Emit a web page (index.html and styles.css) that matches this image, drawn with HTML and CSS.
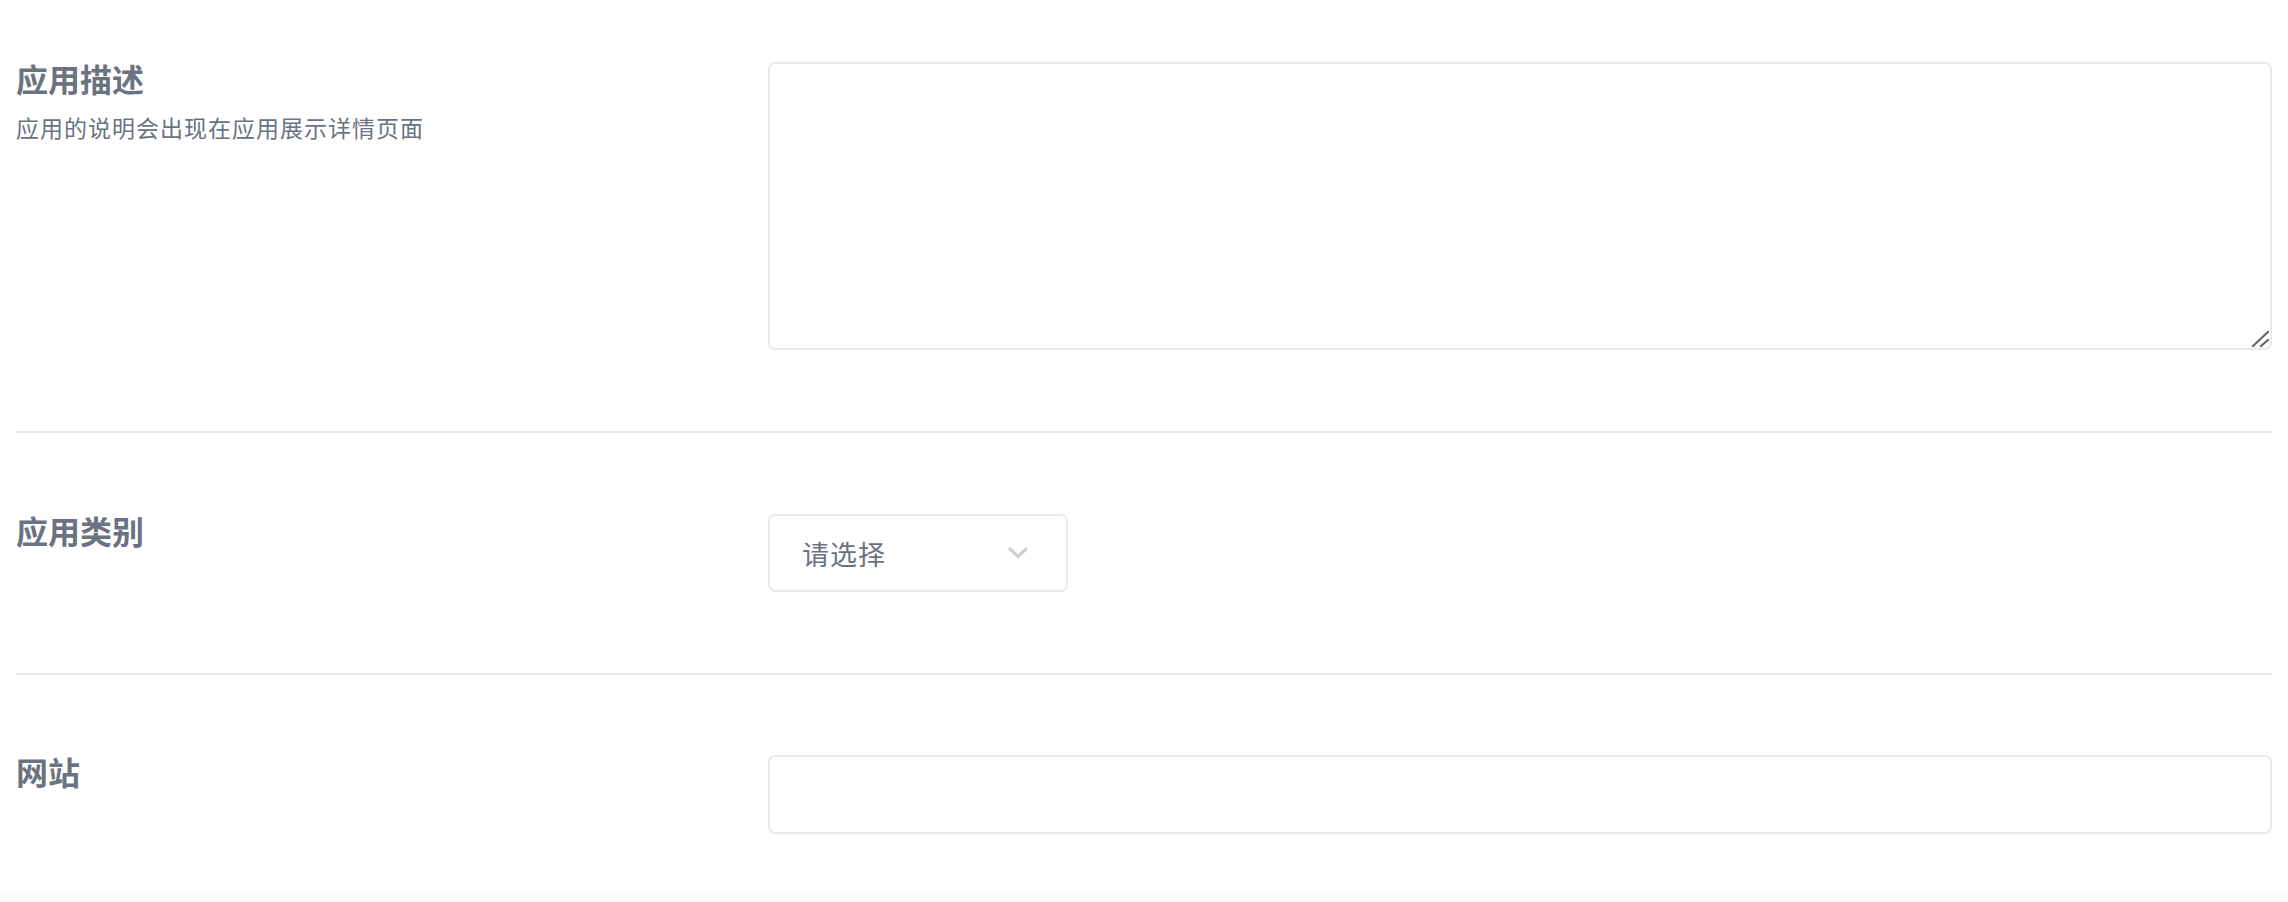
FILE: index.html
```html
<!DOCTYPE html>
<html lang="zh-CN">
<head>
<meta charset="utf-8">
<title>应用设置</title>
<link rel="stylesheet" href="styles.css">
</head>
<body>
<div class="page">
  <form class="form">
    <div class="row row-first">
      <div class="label">
        <div class="title">应用描述</div>
        <div class="hint">应用的说明会出现在应用展示详情页面</div>
      </div>
      <div class="control">
        <div class="textarea-wrap">
          <textarea class="textarea"></textarea>
          <svg class="grip" width="24" height="24" viewBox="0 0 24 24" fill="none">
            <path d="M5 20 L20 6" stroke="#5f6368" stroke-width="2" stroke-linecap="square"/>
            <path d="M13 20 L20 14" stroke="#5f6368" stroke-width="2" stroke-linecap="square"/>
          </svg>
        </div>
      </div>
    </div>
    <div class="row">
      <div class="label">
        <div class="title">应用类别</div>
      </div>
      <div class="control">
        <div class="select">
          <span class="select-text">请选择</span>
          <svg class="chevron" width="20" height="12" viewBox="0 0 20 12" fill="none">
            <path d="M2 2 L10 9.5 L18 2" stroke="#cbcfd6" stroke-width="3.2" stroke-linecap="round" stroke-linejoin="round"/>
          </svg>
        </div>
      </div>
    </div>
    <div class="row row-last">
      <div class="label">
        <div class="title">网站</div>
      </div>
      <div class="control">
        <input class="input" type="text">
      </div>
    </div>
  </form>
  <div class="footer"></div>
</div>
</body>
</html>
```

FILE: styles.css
```css
html, body {
  margin: 0;
  padding: 0;
  background: #ffffff;
}

body {
  font-family: "Noto Sans CJK SC", "Noto Sans", sans-serif;
  color: #6b7280;
}

.page {
  display: flex;
  flex-direction: column;
  min-height: 902px;
}

.form {
  padding: 0 16px;
  flex: 1;
}

.row {
  display: grid;
  grid-template-columns: 1fr 2fr;
  padding: 81px 0;
  border-bottom: 2px solid #e9eaee;
}

.row-first {
  padding-top: 62px;
}

.row-last {
  border-bottom: none;
  padding-top: 80px;
  padding-bottom: 59px;
}

.label {
  display: flex;
  flex-direction: column;
}

.title {
  font-size: 32px;
  line-height: 32px;
  font-weight: 700;
  color: #6b7280;
}

.hint {
  margin-top: 18px;
  font-size: 23px;
  line-height: 30px;
  color: #6b7280;
  letter-spacing: 1px;
}

.control {
  display: flex;
}

.textarea-wrap {
  position: relative;
  width: 100%;
  height: 288px;
}

.textarea {
  box-sizing: border-box;
  display: block;
  width: 100%;
  height: 288px;
  border: 2px solid #e9eaee;
  border-radius: 7px;
  background: #fff;
  margin: 0;
  padding: 12px 16px;
  font: inherit;
  resize: none;
}

.grip {
  position: absolute;
  right: 0;
  bottom: 0;
  display: block;
  pointer-events: none;
}

.select {
  box-sizing: border-box;
  width: 300px;
  height: 78px;
  border: 2px solid #e9eaee;
  border-radius: 7px;
  display: flex;
  align-items: center;
  justify-content: space-between;
  padding: 0 38px 0 32px;
}

.select-text {
  font-size: 27px;
  color: #6b7280;
  letter-spacing: 1px;
}

.chevron {
  display: block;
}

.input {
  box-sizing: border-box;
  display: block;
  width: 100%;
  height: 79px;
  border: 2px solid #e9eaee;
  border-radius: 7px;
  margin: 0;
  padding: 0 16px;
  font: inherit;
  background: #fff;
}

.footer {
  height: 9px;
  background: #fbfbfc;
}
```
